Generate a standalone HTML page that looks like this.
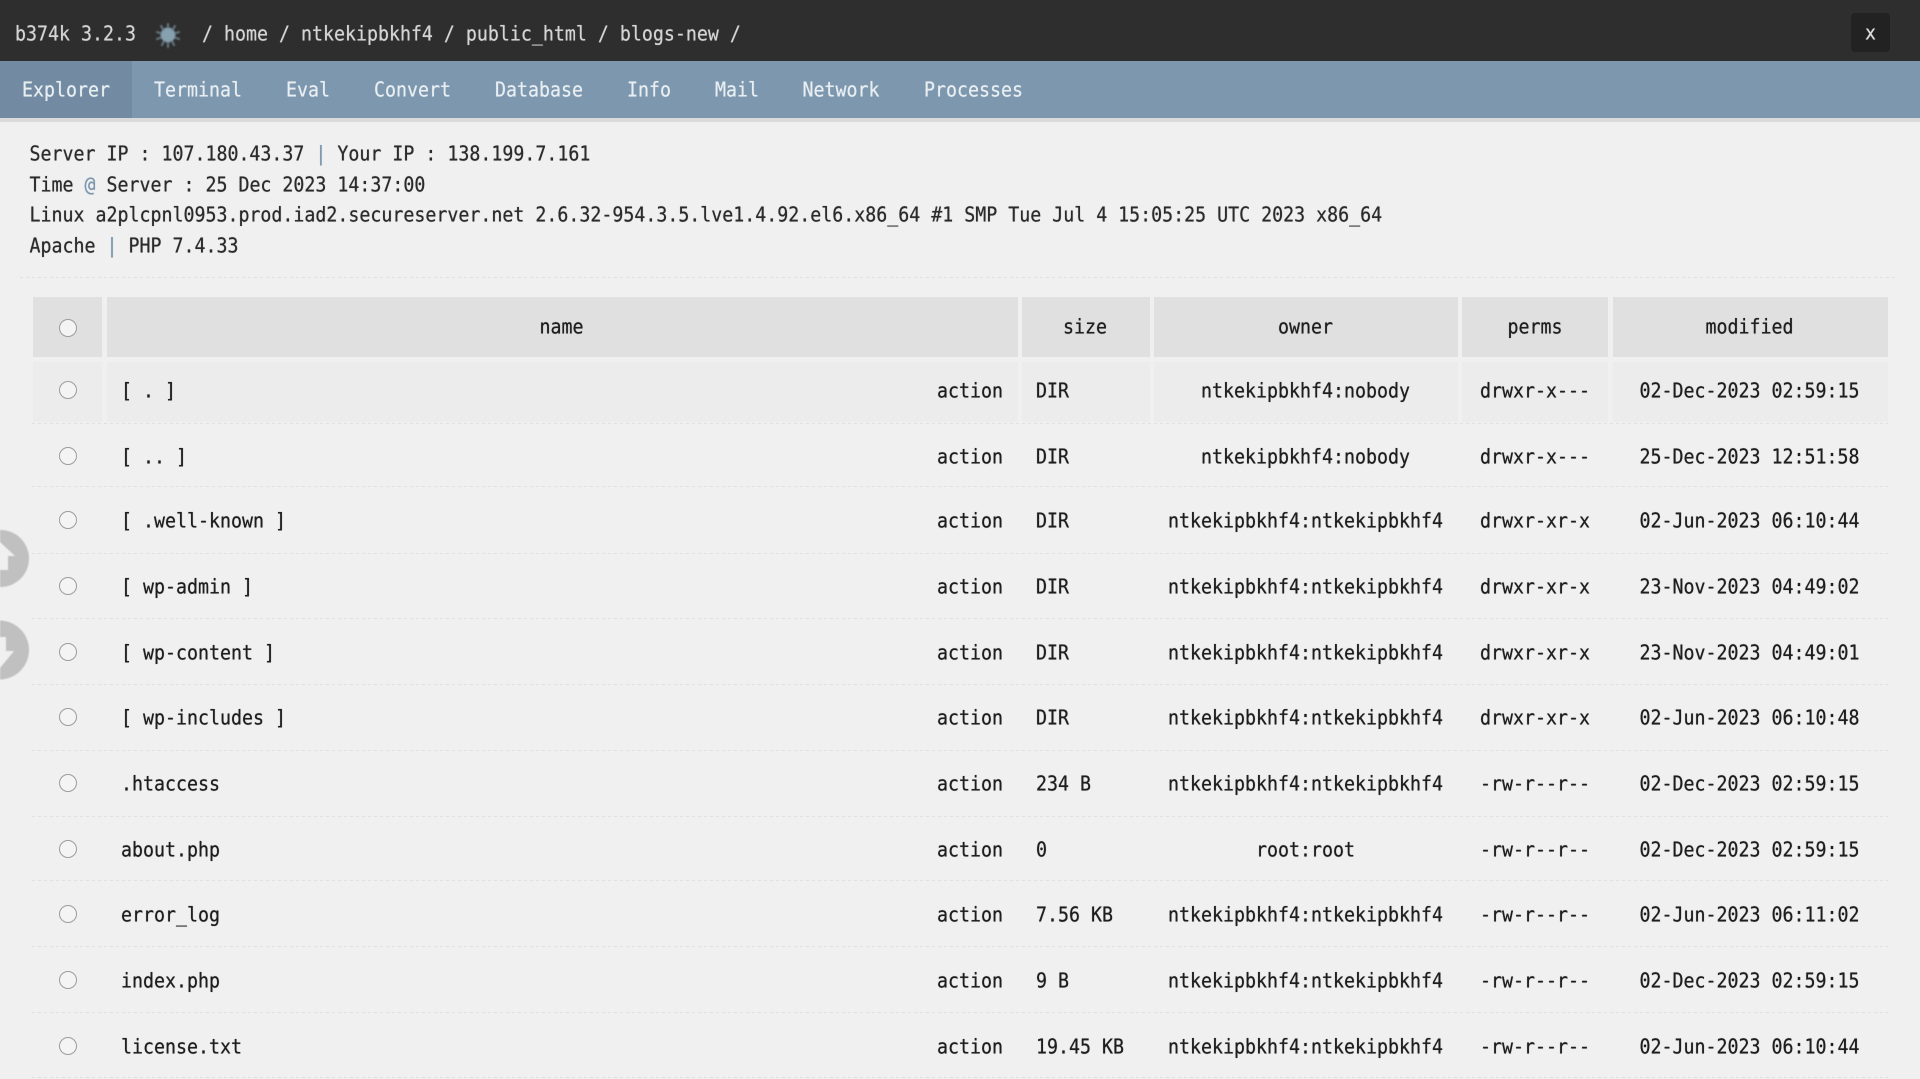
<!DOCTYPE html>
<html><head><meta charset="utf-8"><style>
html,body{margin:0;padding:0;width:1920px;height:1079px;overflow:hidden;background:#f0f0f0}
body{position:relative;font-family:"DejaVu Sans Mono","Liberation Mono",monospace;font-size:18.27px;color:#1e1e1e}
.a{position:absolute;white-space:pre;height:30px;line-height:30px;transform:translateY(1px) scaleY(1.12);transform-origin:center;text-shadow:0 0 .6px currentColor;filter:blur(.25px)}
.c{transform:translateX(-50%) translateY(1px) scaleY(1.12)}
.top{position:absolute;left:0;top:0;width:1920px;height:61px;background:#2e2e2e}
.nav{position:absolute;left:0;top:61px;width:1920px;height:57px;background:#7c97ae}
.act{position:absolute;left:0;top:61px;width:132px;height:57px;background:#728ba2}
.under{position:absolute;left:0;top:118px;width:1920px;height:4px;background:#dadada}
.h{color:#d4d4d4}.n{color:#e8eef2}.s{color:#7c97ae}
.t{color:#2b2b2b}
.hd{position:absolute;top:297px;height:60px;background:#e0e0e0}
.r1{position:absolute;top:362px;height:60px;background:#ececec}
.l{position:absolute;left:32px;width:1856px;height:1px;background:repeating-linear-gradient(90deg,#e0e0e0 0 3px,transparent 3px 6px)}
.o{position:absolute;left:58.5px;width:16px;height:16px;border:1.5px solid #9c9c9c;border-radius:50%;background:#f4f4f4}
.x{position:absolute;left:1851px;top:13px;width:39px;height:39px;background:#222;border-radius:4px}
</style></head><body>
<div class="top"></div><div class="nav"></div><div class="act"></div><div class="under"></div>
<div class="a h" style="left:15px;top:19px">b374k 3.2.3</div>
<svg style="position:absolute;left:152px;top:19px;filter:blur(.8px)" width="32" height="32" viewBox="0 0 32 32"><circle cx="16" cy="16" r="7.5" fill="#86a0b0"/><g stroke="#70858f" stroke-width="2.2" stroke-linecap="round" opacity=".8"><path d="M16 5V9M9 7l2.5 4M23 7l-2.5 4M5 13l4 1.5M27 13l-4 1.5M5 20l4-1.5M27 20l-4-1.5M10 26l2-4M22 26l-2-4M16 28v-4"/></g></svg>
<div class="a h" style="left:202px;top:19px">/ home / ntkekipbkhf4 / public_html / blogs-new /</div>
<div class="x"></div><div class="a" style="left:1865px;top:18px;color:#ddd">x</div>
<div class="a n" style="left:22px;top:75px">Explorer</div>
<div class="a n" style="left:154px;top:75px">Terminal</div>
<div class="a n" style="left:286px;top:75px">Eval</div>
<div class="a n" style="left:374px;top:75px">Convert</div>
<div class="a n" style="left:495px;top:75px">Database</div>
<div class="a n" style="left:627px;top:75px">Info</div>
<div class="a n" style="left:715px;top:75px">Mail</div>
<div class="a n" style="left:802.5px;top:75px">Network</div>
<div class="a n" style="left:924px;top:75px">Processes</div>
<div class="a t" style="left:29.5px;top:139px">Server IP : 107.180.43.37 <span class="s">|</span> Your IP : 138.199.7.161</div>
<div class="a t" style="left:29.5px;top:169.5px">Time <span class="s">@</span> Server : 25 Dec 2023 14:37:00</div>
<div class="a t" style="left:29.5px;top:200px">Linux a2plcpnl0953.prod.iad2.secureserver.net 2.6.32-954.3.5.lve1.4.92.el6.x86_64 #1 SMP Tue Jul 4 15:05:25 UTC 2023 x86_64</div>
<div class="a t" style="left:29.5px;top:231px">Apache <span class="s">|</span> PHP 7.4.33</div>
<div class="l" style="left:20px;width:1878px;top:277px"></div>
<div class="hd" style="left:33px;width:69px"></div><div class="hd" style="left:107px;width:911px"></div><div class="hd" style="left:1022px;width:128px"></div><div class="hd" style="left:1154px;width:304px"></div><div class="hd" style="left:1462px;width:146px"></div><div class="hd" style="left:1613px;width:275px"></div>
<div class="r1" style="left:33px;width:69px"></div><div class="r1" style="left:107px;width:911px"></div><div class="r1" style="left:1022px;width:128px"></div><div class="r1" style="left:1154px;width:304px"></div><div class="r1" style="left:1462px;width:146px"></div><div class="r1" style="left:1613px;width:275px"></div>
<div class="o" style="top:319px"></div>
<div class="a c" style="left:561.5px;top:312px">name</div><div class="a c" style="left:1085px;top:312px">size</div><div class="a c" style="left:1305.5px;top:312px">owner</div><div class="a c" style="left:1535px;top:312px">perms</div><div class="a c" style="left:1749.5px;top:312px">modified</div>

<div class="o" style="top:380.5px"></div><div class="a" style="left:121px;top:376px">[ . ]</div><div class="a" style="left:937px;top:376px">action</div><div class="a" style="left:1036px;top:376px">DIR</div><div class="a c" style="left:1305.5px;top:376px">ntkekipbkhf4:nobody</div><div class="a c" style="left:1535px;top:376px">drwxr-x---</div><div class="a c" style="left:1749.5px;top:376px">02-Dec-2023 02:59:15</div>
<div class="l" style="top:423px"></div>
<div class="o" style="top:446.5px"></div><div class="a" style="left:121px;top:442px">[ .. ]</div><div class="a" style="left:937px;top:442px">action</div><div class="a" style="left:1036px;top:442px">DIR</div><div class="a c" style="left:1305.5px;top:442px">ntkekipbkhf4:nobody</div><div class="a c" style="left:1535px;top:442px">drwxr-x---</div><div class="a c" style="left:1749.5px;top:442px">25-Dec-2023 12:51:58</div>
<div class="l" style="top:486px"></div>
<div class="o" style="top:510.5px"></div><div class="a" style="left:121px;top:506px">[ .well-known ]</div><div class="a" style="left:937px;top:506px">action</div><div class="a" style="left:1036px;top:506px">DIR</div><div class="a c" style="left:1305.5px;top:506px">ntkekipbkhf4:ntkekipbkhf4</div><div class="a c" style="left:1535px;top:506px">drwxr-xr-x</div><div class="a c" style="left:1749.5px;top:506px">02-Jun-2023 06:10:44</div>
<div class="l" style="top:553px"></div>
<div class="o" style="top:576.5px"></div><div class="a" style="left:121px;top:572px">[ wp-admin ]</div><div class="a" style="left:937px;top:572px">action</div><div class="a" style="left:1036px;top:572px">DIR</div><div class="a c" style="left:1305.5px;top:572px">ntkekipbkhf4:ntkekipbkhf4</div><div class="a c" style="left:1535px;top:572px">drwxr-xr-x</div><div class="a c" style="left:1749.5px;top:572px">23-Nov-2023 04:49:02</div>
<div class="l" style="top:618px"></div>
<div class="o" style="top:642.5px"></div><div class="a" style="left:121px;top:638px">[ wp-content ]</div><div class="a" style="left:937px;top:638px">action</div><div class="a" style="left:1036px;top:638px">DIR</div><div class="a c" style="left:1305.5px;top:638px">ntkekipbkhf4:ntkekipbkhf4</div><div class="a c" style="left:1535px;top:638px">drwxr-xr-x</div><div class="a c" style="left:1749.5px;top:638px">23-Nov-2023 04:49:01</div>
<div class="l" style="top:684px"></div>
<div class="o" style="top:708px"></div><div class="a" style="left:121px;top:703px">[ wp-includes ]</div><div class="a" style="left:937px;top:703px">action</div><div class="a" style="left:1036px;top:703px">DIR</div><div class="a c" style="left:1305.5px;top:703px">ntkekipbkhf4:ntkekipbkhf4</div><div class="a c" style="left:1535px;top:703px">drwxr-xr-x</div><div class="a c" style="left:1749.5px;top:703px">02-Jun-2023 06:10:48</div>
<div class="l" style="top:750px"></div>
<div class="o" style="top:774px"></div><div class="a" style="left:121px;top:769px">.htaccess</div><div class="a" style="left:937px;top:769px">action</div><div class="a" style="left:1036px;top:769px">234 B</div><div class="a c" style="left:1305.5px;top:769px">ntkekipbkhf4:ntkekipbkhf4</div><div class="a c" style="left:1535px;top:769px">-rw-r--r--</div><div class="a c" style="left:1749.5px;top:769px">02-Dec-2023 02:59:15</div>
<div class="l" style="top:816px"></div>
<div class="o" style="top:840px"></div><div class="a" style="left:121px;top:835px">about.php</div><div class="a" style="left:937px;top:835px">action</div><div class="a" style="left:1036px;top:835px">0</div><div class="a c" style="left:1305.5px;top:835px">root:root</div><div class="a c" style="left:1535px;top:835px">-rw-r--r--</div><div class="a c" style="left:1749.5px;top:835px">02-Dec-2023 02:59:15</div>
<div class="l" style="top:880px"></div>
<div class="o" style="top:905px"></div><div class="a" style="left:121px;top:900px">error_log</div><div class="a" style="left:937px;top:900px">action</div><div class="a" style="left:1036px;top:900px">7.56 KB</div><div class="a c" style="left:1305.5px;top:900px">ntkekipbkhf4:ntkekipbkhf4</div><div class="a c" style="left:1535px;top:900px">-rw-r--r--</div><div class="a c" style="left:1749.5px;top:900px">02-Jun-2023 06:11:02</div>
<div class="l" style="top:946px"></div>
<div class="o" style="top:971px"></div><div class="a" style="left:121px;top:966px">index.php</div><div class="a" style="left:937px;top:966px">action</div><div class="a" style="left:1036px;top:966px">9 B</div><div class="a c" style="left:1305.5px;top:966px">ntkekipbkhf4:ntkekipbkhf4</div><div class="a c" style="left:1535px;top:966px">-rw-r--r--</div><div class="a c" style="left:1749.5px;top:966px">02-Dec-2023 02:59:15</div>
<div class="l" style="top:1012px"></div>
<div class="o" style="top:1037px"></div><div class="a" style="left:121px;top:1032px">license.txt</div><div class="a" style="left:937px;top:1032px">action</div><div class="a" style="left:1036px;top:1032px">19.45 KB</div><div class="a c" style="left:1305.5px;top:1032px">ntkekipbkhf4:ntkekipbkhf4</div><div class="a c" style="left:1535px;top:1032px">-rw-r--r--</div><div class="a c" style="left:1749.5px;top:1032px">02-Jun-2023 06:10:44</div>
<div class="l" style="top:1077px"></div>
<svg style="position:absolute;left:0;top:520px;filter:blur(.5px)" width="40" height="170" viewBox="0 0 40 170"><circle cx="0.5" cy="38.5" r="28.5" fill="#c0c0c0"/><path d="M0 22L15 36H8V50H0Z" fill="#f0f0f0"/><circle cx="-0.5" cy="130" r="29.5" fill="#c0c0c0"/><path d="M0 148L14 131H6V117H0Z" fill="#f0f0f0"/></svg>
</body></html>
